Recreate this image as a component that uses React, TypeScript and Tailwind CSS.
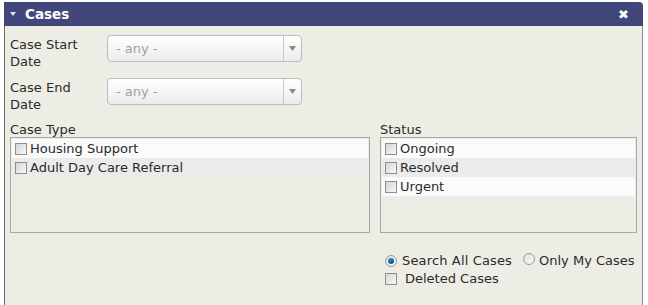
import React from 'react';

const font = { fontFamily: '"DejaVu Sans", Verdana, sans-serif' };

function Check() {
  return (
    <span className="inline-block w-[12px] h-[12px] border border-[#8f8f8f] bg-gradient-to-br from-[#d6d6d6] to-[#f8f8f8] shrink-0" />
  );
}

function Radio({ on }: { on?: boolean }) {
  return (
    <span className="relative inline-flex items-center justify-center w-[12px] h-[12px] rounded-full border border-[#9a9a9a] bg-gradient-to-br from-[#dddddd] to-[#fafafa] shrink-0">
      {on && <span className="w-[6px] h-[6px] rounded-full bg-gradient-to-br from-[#2f8fd0] to-[#0b4f86]" />}
    </span>
  );
}

function Select() {
  return (
    <div className="flex w-[195px] h-[27px] rounded-[4px] border border-[#bdbdbd] bg-gradient-to-b from-white to-[#ececec] overflow-hidden">
      <div className="flex-1 flex items-center pl-[8px] text-[13px] text-[#a0a0a0]">- any -</div>
      <div className="w-[18px] border-l border-[#c8c8c8] flex items-center justify-center">
        <svg width="7" height="5" viewBox="0 0 7 5"><path d="M0 0h7L3.5 5z" fill="#8a8a8a" /></svg>
      </div>
    </div>
  );
}

function ListBox({ items }: { items: string[] }) {
  return (
    <div className="h-[96px] border border-[#a8a8a8] p-px">
      {items.map((t, i) => (
        <div key={t} className={`flex items-center gap-[3px] h-[19px] pl-[3px] ${i % 2 === 0 ? 'bg-[#fbfbfb]' : 'bg-[#ebebeb]'}`}>
          <Check />
          <span className="text-[13px] text-[#2a2a2a]">{t}</span>
        </div>
      ))}
    </div>
  );
}

export default function App() {
  return (
    <div className="w-[648px] h-[305px] bg-white pt-[2px] pl-[4px] pr-[5px] overflow-hidden" style={font}>
      <div className="h-full flex flex-col">
        <div className="h-[24px] bg-[#41477b] rounded-tr-[4px] flex items-center pl-[6px] pr-[14px]">
          <svg width="6" height="4" viewBox="0 0 6 4" className="mr-[9px]"><path d="M0 0h6L3 4z" fill="#e6e7f0" /></svg>
          <span className="text-[13.5px] font-bold text-white">Cases</span>
          <span className="ml-auto text-[13px] font-bold text-white leading-none">✖</span>
        </div>
        <div className="flex-1 bg-[#eeede5] border-l border-[#6e6e6e] border-r border-r-[#8a8a8a] pl-[5px] pr-[4px] pt-[9px]">
          <div className="flex h-[27px]">
            <div className="w-[97px] text-[13px] leading-[17px] text-[#2a2a2a] pt-[1px]">Case Start<br />Date</div>
            <Select />
          </div>
          <div className="flex h-[27px] mt-[16px]">
            <div className="w-[97px] text-[13px] leading-[17px] text-[#2a2a2a] pt-[1px]">Case End<br />Date</div>
            <Select />
          </div>
          <div className="flex gap-[10px] mt-[17px]">
            <div className="w-[360px]">
              <div className="text-[13px] leading-[15px] text-[#2a2a2a]">Case Type</div>
              <ListBox items={['Housing Support', 'Adult Day Care Referral']} />
            </div>
            <div className="w-[257px]">
              <div className="text-[13px] leading-[15px] text-[#2a2a2a]">Status</div>
              <ListBox items={['Ongoing', 'Resolved', 'Urgent']} />
            </div>
          </div>
          <div className="pl-[375px] mt-[19px] text-[13px] text-[#2a2a2a]">
            <div className="flex items-center h-[18px]">
              <Radio on />
              <span className="ml-[5px] tracking-[0.15px]">Search All Cases</span>
              <span className="ml-[11px]"><Radio /></span>
              <span className="ml-[4px]">Only My Cases</span>
            </div>
            <div className="flex items-center h-[18px]">
              <Check />
              <span className="ml-[8px]">Deleted Cases</span>
            </div>
          </div>
        </div>
      </div>
    </div>
  );
}
